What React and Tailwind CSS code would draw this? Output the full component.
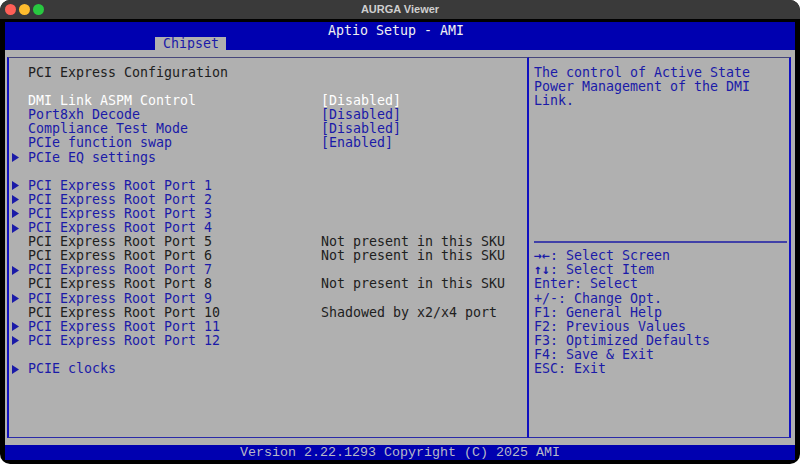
import React from "react";

const FONT = { fontFamily: '"DejaVu Sans Mono", "Liberation Mono", monospace' };

function Tri() {
  return (
    <svg width="7" height="9" viewBox="0 0 7 9" className="block">
      <path d="M0 0 L7 4.5 L0 9 Z" fill="#1a1aa8" />
    </svg>
  );
}

const rows = [
  { label: "PCI Express Configuration", color: "text-[#202020]" },
  {},
  { label: "DMI Link ASPM Control", value: "[Disabled]", color: "text-white" },
  { label: "Port8xh Decode", value: "[Disabled]", color: "text-[#1a1aa8]" },
  { label: "Compliance Test Mode", value: "[Disabled]", color: "text-[#1a1aa8]" },
  { label: "PCIe function swap", value: "[Enabled]", color: "text-[#1a1aa8]" },
  { label: "PCIe EQ settings", tri: true, color: "text-[#1a1aa8]" },
  {},
  { label: "PCI Express Root Port 1", tri: true, color: "text-[#1a1aa8]" },
  { label: "PCI Express Root Port 2", tri: true, color: "text-[#1a1aa8]" },
  { label: "PCI Express Root Port 3", tri: true, color: "text-[#1a1aa8]" },
  { label: "PCI Express Root Port 4", tri: true, color: "text-[#1a1aa8]" },
  { label: "PCI Express Root Port 5", value: "Not present in this SKU", color: "text-[#202020]" },
  { label: "PCI Express Root Port 6", value: "Not present in this SKU", color: "text-[#202020]" },
  { label: "PCI Express Root Port 7", tri: true, color: "text-[#1a1aa8]" },
  { label: "PCI Express Root Port 8", value: "Not present in this SKU", color: "text-[#202020]" },
  { label: "PCI Express Root Port 9", tri: true, color: "text-[#1a1aa8]" },
  { label: "PCI Express Root Port 10", value: "Shadowed by x2/x4 port", color: "text-[#202020]" },
  { label: "PCI Express Root Port 11", tri: true, color: "text-[#1a1aa8]" },
  { label: "PCI Express Root Port 12", tri: true, color: "text-[#1a1aa8]" },
  {},
  { label: "PCIE clocks", tri: true, color: "text-[#1a1aa8]" },
];

const help = [
  "The control of Active State",
  "Power Management of the DMI",
  "Link.",
  "", "", "", "", "", "", "", "", "",
  "SEP",
  "→←: Select Screen",
  "↑↓: Select Item",
  "Enter: Select",
  "+/-: Change Opt.",
  "F1: General Help",
  "F2: Previous Values",
  "F3: Optimized Defaults",
  "F4: Save & Exit",
  "ESC: Exit",
];

export default function App() {
  return (
    <div className="w-[800px] h-[464px] bg-white">
      <div className="w-[800px] h-[464px] bg-black rounded-[10px] overflow-hidden flex flex-col">
        {/* mac title bar */}
        <div className="h-[19px] bg-[#3a3a3a] relative flex items-center justify-center shrink-0">
          <div className="absolute left-[5px] top-[4px] flex gap-[2px]">
            <span className="w-[11px] h-[11px] rounded-full bg-[#fe5f57]" />
            <span className="w-[11px] h-[11px] rounded-full bg-[#febc2e] ml-[1px]" />
            <span className="w-[11px] h-[11px] rounded-full bg-[#28c840] ml-[1px]" />
          </div>
          <span
            className="text-[11px] font-bold text-[#cfcfcf] leading-none"
            style={{ fontFamily: '"Liberation Sans", Arial, sans-serif' }}
          >
            AURGA Viewer
          </span>
        </div>
        <div className="h-[3px] shrink-0" />
        {/* screen */}
        <div className="mx-[5px] h-[438px] flex flex-col text-[13.29px]" style={FONT}>
          {/* header */}
          <div className="h-[28px] bg-[#0000b0] flex flex-col shrink-0">
            <div className="h-[15px] leading-[17px] text-center text-[#f0f0f0] pr-[8px]">
              Aptio Setup - AMI
            </div>
            <div className="h-[13px] pl-[150px]">
              <div className="w-[71px] h-[13px] bg-[#b0b0b0] text-[#1a1aa8] leading-[14px] pl-[8px]">
                Chipset
              </div>
            </div>
          </div>
          {/* body */}
          <div className="h-[395px] bg-[#b0b0b0] flex pt-[7px] pb-[7px] pl-[2px] pr-[4px] shrink-0">
            <div className="w-[522px] h-[381px] border-l-2 border-r-2 border-l-[#1010c0] border-r-[#1010c0] border-t border-b border-t-[#46467a] border-b-[#2a2aa8] pt-[8px] pl-[3px]">
              {rows.map((r, i) => (
                <div key={i} className={`flex h-[14.1px] leading-[14.1px] items-center ${r.color || ""}`}>
                  <div className="w-[16px] flex items-center">{r.tri ? <Tri /> : null}</div>
                  <div className="w-[293px] whitespace-pre">{r.label || ""}</div>
                  <div className="whitespace-pre">{r.value || ""}</div>
                </div>
              ))}
            </div>
            <div className="w-[262px] h-[381px] border-r-2 border-r-[#1010c0] border-t border-b border-t-[#46467a] border-b-[#2a2aa8] pt-[8px] pl-[5px] pr-[2px] text-[#1a1aa8]">
              {help.map((h, i) =>
                h === "SEP" ? (
                  <div key={i} className="h-[14.1px] flex items-center">
                    <div className="w-full h-[2px] bg-[#4040a8]" />
                  </div>
                ) : (
                  <div key={i} className="h-[14.1px] leading-[14.1px] whitespace-pre">
                    {h.startsWith("→←") || h.startsWith("↑↓") ? (
                      <>
                        <span className="font-bold">{h.slice(0, 2)}</span>
                        {h.slice(2)}
                      </>
                    ) : (
                      h
                    )}
                  </div>
                )
              )}
            </div>
          </div>
          {/* footer */}
          <div
            className="h-[15px] bg-[#0000b0] text-center text-[#b8b8c8] leading-[15px] text-[13.33px] shrink-0"
            style={{ fontFamily: '"Liberation Mono", monospace' }}
          >
            Version 2.22.1293 Copyright (C) 2025 AMI
          </div>
        </div>
      </div>
    </div>
  );
}
